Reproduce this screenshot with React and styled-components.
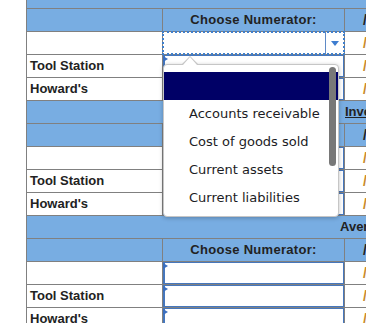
import React from 'react';
import styled, { createGlobalStyle } from 'styled-components';

const GlobalStyle = createGlobalStyle`
  html, body {
    margin: 0;
    padding: 0;
    background: #fff;
    overflow: hidden;
  }
  body {
    font-family: 'Liberation Sans', Arial, sans-serif;
    color: #222;
  }
`;

const Page = styled.div`
  padding-left: 26px;
  margin-top: -14px;
  width: 640px;
`;

const Sheet = styled.div`
  border-left: 1px solid #808080;
`;

const Band = styled.div`
  height: 22px;
  line-height: 22px;
  background: #78ade2;
  border-bottom: 1px solid #808080;
  padding-left: ${(p) => p.indent || 0}px;
  font-size: 13px;
  font-weight: bold;
  white-space: nowrap;
  text-decoration: ${(p) => (p.underline ? 'underline' : 'none')};
`;

const Row = styled.div`
  display: flex;
  height: 22px;
  border-bottom: 1px solid #808080;
  background: ${(p) => (p.head ? '#78ade2' : '#fff')};
`;

const NameCell = styled.div`
  width: 136px;
  flex: none;
  box-sizing: border-box;
  border-right: 1px solid #808080;
  padding-left: 3px;
  font-size: 13px;
  font-weight: bold;
  line-height: 22px;
  white-space: nowrap;
`;

const PickCell = styled.div`
  position: relative;
  width: 181px;
  flex: none;
  border-right: 1px solid #808080;
  font-size: 13px;
  font-weight: bold;
  letter-spacing: 0.3px;
  line-height: 22px;
  text-align: center;
  white-space: nowrap;
`;

const SlashCell = styled.div`
  flex: 1;
  padding-left: 18px;
  font-size: 14px;
  font-weight: bold;
  line-height: 22px;
  color: ${(p) => (p.head ? '#222' : '#c98a2a')};
`;

const InputBox = styled.div`
  box-sizing: border-box;
  height: 100%;
  border: 1px solid #4677bd;
  border-left-width: 2px;
  background: #fff;
`;

const Marker = styled.span`
  position: absolute;
  top: 1px;
  left: 0;
  width: 0;
  height: 0;
  border-top: 3px solid transparent;
  border-bottom: 3px solid transparent;
  border-left: 5px solid #3a6fc0;
`;

const FocusSelect = styled.div`
  box-sizing: border-box;
  height: 100%;
  display: flex;
  justify-content: flex-end;
  outline: 2px dotted #3f7fcc;
  outline-offset: -1px;
  background: #fff;
`;

const ArrowBox = styled.div`
  width: 18px;
  border-left: 1px solid #5f8ac6;
  display: flex;
  align-items: center;
  justify-content: center;
`;

const Arrow = styled.span`
  width: 0;
  height: 0;
  border-top: 5px solid #3d7dd0;
  border-left: 4.5px solid transparent;
  border-right: 4.5px solid transparent;
  margin-top: 1px;
`;

const Popup = styled.div`
  position: absolute;
  z-index: 10;
  top: 32px;
  left: 0;
  width: 176px;
  height: 153px;
  box-sizing: border-box;
  border: 1px solid #c6c6c6;
  border-radius: 4px;
  background: #fff;
  box-shadow: 0 1px 4px rgba(0, 0, 0, 0.25);
  text-align: left;
  letter-spacing: 0;

  &::before {
    content: '';
    position: absolute;
    top: -9px;
    left: 18px;
    border-left: 8px solid transparent;
    border-right: 8px solid transparent;
    border-bottom: 8px solid #c6c6c6;
  }
  &::after {
    content: '';
    position: absolute;
    top: -8px;
    left: 19px;
    border-left: 7px solid transparent;
    border-right: 7px solid transparent;
    border-bottom: 8px solid #fff;
  }
`;

const OptionList = styled.ul`
  list-style: none;
  margin: 0;
  padding: 7px 0 0;
  height: 100%;
  box-sizing: border-box;
  overflow: hidden;
`;

const Option = styled.li`
  height: 28px;
  line-height: 28px;
  padding-left: 25px;
  font-family: 'DejaVu Sans', Verdana, sans-serif;
  font-size: 13px;
  font-weight: normal;
  color: #1c1c24;
  background: ${(p) => (p.active ? '#000066' : 'transparent')};
`;

const Thumb = styled.div`
  position: absolute;
  top: 2px;
  right: 2px;
  width: 7px;
  height: 99px;
  border-radius: 4px;
  background: #787878;
`;

const options = [
  '',
  'Accounts receivable',
  'Cost of goods sold',
  'Current assets',
  'Current liabilities',
  'Inventory',
];

const Dropdown = () => (
  <Popup>
    <OptionList>
      {options.map((o, i) => (
        <Option key={i} active={i === 0}>
          {o}
        </Option>
      ))}
    </OptionList>
    <Thumb />
  </Popup>
);

const sections = [
  { title: '', indent: 0, underline: false, open: true },
  { title: 'Inventory Turnover', indent: 318, underline: true },
  { title: 'Average Days in Inventory', indent: 313, underline: false },
];

const names = ['', 'Tool Station', "Howard's"];

const Section = ({ title, indent, underline, open }) => (
  <>
    <Band indent={indent} underline={underline}>
      {title}
    </Band>
    <Row head>
      <NameCell />
      <PickCell>Choose Numerator:</PickCell>
      <SlashCell head>/</SlashCell>
    </Row>
    {names.map((n, i) => (
      <Row key={i}>
        <NameCell>{n}</NameCell>
        <PickCell>
          {open && i === 0 ? (
            <>
              <FocusSelect>
                <ArrowBox>
                  <Arrow />
                </ArrowBox>
              </FocusSelect>
              <Dropdown />
            </>
          ) : (
            <>
              <InputBox />
              <Marker />
            </>
          )}
        </PickCell>
        <SlashCell>/</SlashCell>
      </Row>
    ))}
  </>
);

const App = () => (
  <>
    <GlobalStyle />
    <Page>
      <Sheet>
        {sections.map((s, i) => (
          <Section key={i} {...s} />
        ))}
      </Sheet>
    </Page>
  </>
);

export default App;
